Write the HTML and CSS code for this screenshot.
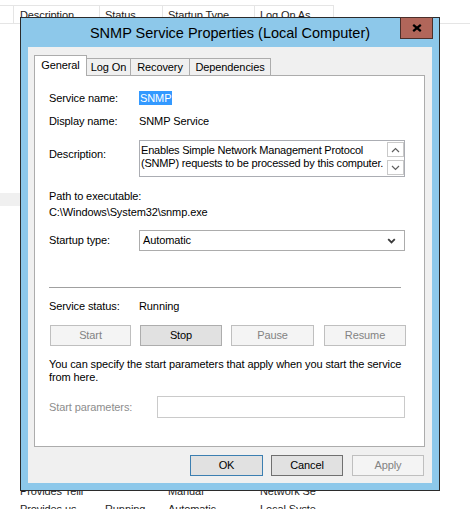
FILE: index.html
```html
<!DOCTYPE html>
<html>
<head>
<meta charset="utf-8">
<title>SNMP Service Properties</title>
<link rel="stylesheet" href="styles.css">
</head>
<body>
<div class="screen">
  <div class="list">
    <div class="list-head">
      <div class="col c0"></div>
      <div class="col c1">Description</div>
      <div class="col c2">Status</div>
      <div class="col c3">Startup Type</div>
      <div class="col c4">Log On As</div>
    </div>
    <div class="hover-row"></div>
    <div class="row first-row">
      <div class="col c0"></div>
      <div class="col c1">Provides Telli</div>
      <div class="col c2"></div>
      <div class="col c3">Manual</div>
      <div class="col c4">Network Se</div>
    </div>
    <div class="row">
      <div class="col c0"></div>
      <div class="col c1">Provides us</div>
      <div class="col c2">Running</div>
      <div class="col c3">Automatic</div>
      <div class="col c4">Local Syste</div>
    </div>
  </div>

  <div class="dialog">
    <div class="titlebar">
      <div class="title">SNMP Service Properties (Local Computer)</div>
      <div class="close">
        <svg width="10" height="8" viewBox="0 0 10 8"><path d="M1.2 0.8L8.8 7.2M8.8 0.8L1.2 7.2" stroke="#000" stroke-width="2.2" fill="none"/></svg>
      </div>
    </div>
    <div class="client">
      <div class="tabs">
        <div class="tab active t-general">General</div>
        <div class="tab t-logon">Log On</div>
        <div class="tab t-recovery">Recovery</div>
        <div class="tab t-deps">Dependencies</div>
      </div>
      <div class="panel">
        <div class="field r-name">
          <div class="label">Service name:</div>
          <div class="value"><span class="sel">SNMP</span></div>
        </div>
        <div class="field r-display">
          <div class="label">Display name:</div>
          <div class="value">SNMP Service</div>
        </div>
        <div class="field r-desc">
          <div class="label desc-label">Description:</div>
          <div class="textbox">
            <div class="textbox-text">Enables Simple Network Management Protocol<br>(SNMP) requests to be processed by this computer.</div>
            <div class="scroll">
              <div class="sbtn"><svg width="9" height="6" viewBox="0 0 9 6"><path d="M1 5L4.5 1.5L8 5" stroke="#5f5f5f" stroke-width="1.2" fill="none"/></svg></div>
              <div class="sbtn"><svg width="9" height="6" viewBox="0 0 9 6"><path d="M1 1L4.5 4.5L8 1" stroke="#5f5f5f" stroke-width="1.2" fill="none"/></svg></div>
            </div>
          </div>
        </div>
        <div class="path-block">
          <div class="path-label">Path to executable:</div>
          <div class="path-value">C:\Windows\System32\snmp.exe</div>
        </div>
        <div class="field r-startup">
          <div class="label">Startup type:</div>
          <div class="combo">
            <span>Automatic</span>
            <svg width="9" height="6" viewBox="0 0 9 6"><path d="M1.2 1.2L4.5 4.5L7.8 1.2" stroke="#3a3a3a" stroke-width="1.8" fill="none"/></svg>
          </div>
        </div>
        <div class="separator"></div>
        <div class="field r-status">
          <div class="label">Service status:</div>
          <div class="value">Running</div>
        </div>
        <div class="svc-buttons">
          <div class="btn disabled b-start">Start</div>
          <div class="btn b-stop">Stop</div>
          <div class="btn disabled b-pause">Pause</div>
          <div class="btn disabled b-resume">Resume</div>
        </div>
        <div class="info">You can specify the start parameters that apply when you start the service<br>from here.</div>
        <div class="field r-params">
          <div class="label params-label">Start parameters:</div>
          <div class="params-box"></div>
        </div>
      </div>
      <div class="dlg-buttons">
        <div class="btn b-ok">OK</div>
        <div class="btn b-cancel">Cancel</div>
        <div class="btn disabled b-apply">Apply</div>
      </div>
    </div>
  </div>
</div>
</body>
</html>
```

FILE: styles.css
```css
* { box-sizing: border-box; }
html, body { margin: 0; padding: 0; }
body {
  width: 470px;
  height: 509px;
  overflow: hidden;
  background: #ffffff;
  font-family: "Liberation Sans", Arial, sans-serif;
  font-size: 11px;
  letter-spacing: -0.1px;
  color: #000;
}
.screen {
  position: relative;
  width: 470px;
  height: 509px;
  overflow: hidden;
}

/* background services list */
.list { padding-top: 5px; }
.list-head {
  display: flex;
  border-bottom: 1px solid #e5e5e5;
}
.list-head .col {
  height: 18px;
  border-top: 1px solid #e5e5e5;
  border-right: 1px solid #e5e5e5;
  padding-top: 2px;
  color: #1e1e1e;
}
.col {
  flex: none;
  line-height: 15px;
  white-space: nowrap;
  overflow: hidden;
  padding-left: 5px;
}
.c0 { width: 14px; padding-left: 0; }
.c1 { width: 86px; padding-left: 6px; }
.c2 { width: 63px; }
.c3 { width: 92px; }
.c4 { width: 79px; }
.hover-row {
  margin-top: 169px;
  width: 20px;
  height: 13px;
  background: #f0f0f0;
}
.row { display: flex; height: 18px; }
.row .col { line-height: 18px; color: #1e1e1e; border-right: 1px solid transparent; }
.first-row { margin-top: 276px; }

/* dialog window */
.dialog {
  position: absolute;
  left: 20px;
  top: 17px;
  width: 420px;
  height: 474px;
  border: 1px solid #2b2b2b;
  background: #8dc8ea;
  display: flex;
  flex-direction: column;
}
.titlebar {
  height: 29px;
  flex: none;
  display: flex;
  justify-content: center;
  padding-top: 6px;
}
.title {
  font-size: 14.5px;
  letter-spacing: 0;
  line-height: 18px;
  color: #000;
}
.close {
  position: absolute;
  top: -1px;
  right: 6px;
  width: 33px;
  height: 22px;
  background: #b1665a;
  border: 1px solid #4b2f2a;
  display: flex;
  align-items: center;
  justify-content: center;
}
.client {
  flex: none;
  height: 436px;
  margin: 0 7px;
  background: #f0f0f0;
  padding: 8px 7px 7px 6px;
  display: flex;
  flex-direction: column;
}

/* tabs */
.tabs {
  display: flex;
  align-items: flex-end;
  height: 20px;
  flex: none;
}
.tab {
  height: 17px;
  border: 1px solid #acacac;
  border-bottom: none;
  line-height: 16px;
  text-align: center;
  background: #f0f0f0;
  margin-left: -1px;
  white-space: nowrap;
}
.tab.active {
  height: 21px;
  margin-left: 0;
  margin-bottom: -1px;
  background: #fff;
  padding-top: 1px;
  position: relative;
  z-index: 1;
}
.t-general { width: 53px; }
.t-logon { width: 45px; }
.t-recovery { width: 60px; }
.t-deps { width: 82px; }

.panel {
  flex: none;
  height: 372px;
  background: #fff;
  border: 1px solid #acacac;
  padding: 15px 19px 0 14px;
  display: flex;
  flex-direction: column;
}
.field {
  display: flex;
  align-items: center;
  line-height: 15px;
}
.label { width: 90px; flex: none; }
.value { white-space: nowrap; }
.sel {
  background: #3399ff;
  color: #fff;
  padding: 1px 1px 1px 1px;
}
.r-display { margin-top: 8px; }
.r-desc { margin-top: 11px; align-items: flex-start; }
.desc-label { padding-top: 7px; }
.textbox {
  width: 266px;
  height: 37px;
  border: 1px solid #abadb3;
  display: flex;
  background: #fff;
}
.textbox-text {
  flex: 1;
  padding: 3px 0 0 1px;
  line-height: 13px;
  letter-spacing: -0.2px;
  overflow: hidden;
  white-space: nowrap;
}
.scroll {
  width: 17px;
  flex: none;
  display: flex;
  flex-direction: column;
  justify-content: space-between;
  padding: 1px 0 1px 0;
}
.sbtn {
  height: 15px;
  border: 1px solid #c9c9c9;
  display: flex;
  align-items: center;
  justify-content: center;
}
.path-block { margin-top: 11px; line-height: 16px; }
.r-startup { margin-top: 10px; }
.combo {
  width: 266px;
  height: 21px;
  border: 1px solid #acacac;
  background: #fff;
  display: flex;
  align-items: center;
  justify-content: space-between;
  padding: 0 8px 0 3px;
}
.separator {
  margin-top: 36px;
  height: 1px;
  width: 352px;
  background: #a0a0a0;
}
.r-status { margin-top: 11px; }
.svc-buttons {
  margin-top: 11px;
  display: flex;
  padding-left: 1px;
}
.btn {
  height: 21px;
  border: 1px solid #adadad;
  background: #e1e1e1;
  text-align: center;
  line-height: 19px;
  flex: none;
}
.btn.disabled {
  background: #f4f4f4;
  border-color: #bfbfbf;
  color: #838383;
}
.b-start { width: 81px; }
.b-stop { width: 82px; margin-left: 9px; }
.b-pause { width: 83px; margin-left: 9px; }
.b-resume { width: 82px; margin-left: 10px; }
.info { margin-top: 12px; line-height: 13px; white-space: nowrap; }
.r-params { margin-top: 12px; }
.params-label { width: 108px; color: #8d8d8d; }
.params-box {
  width: 248px;
  height: 22px;
  border: 1px solid #cacaca;
  background: #fff;
}

.dlg-buttons {
  margin-top: 8px;
  display: flex;
  justify-content: flex-end;
  padding-right: 1px;
}
.b-ok { width: 73px; border-color: #3c7fb1; }
.b-cancel { width: 72px; margin-left: 8px; border-color: #707070; }
.b-apply { width: 72px; margin-left: 9px; }
```
